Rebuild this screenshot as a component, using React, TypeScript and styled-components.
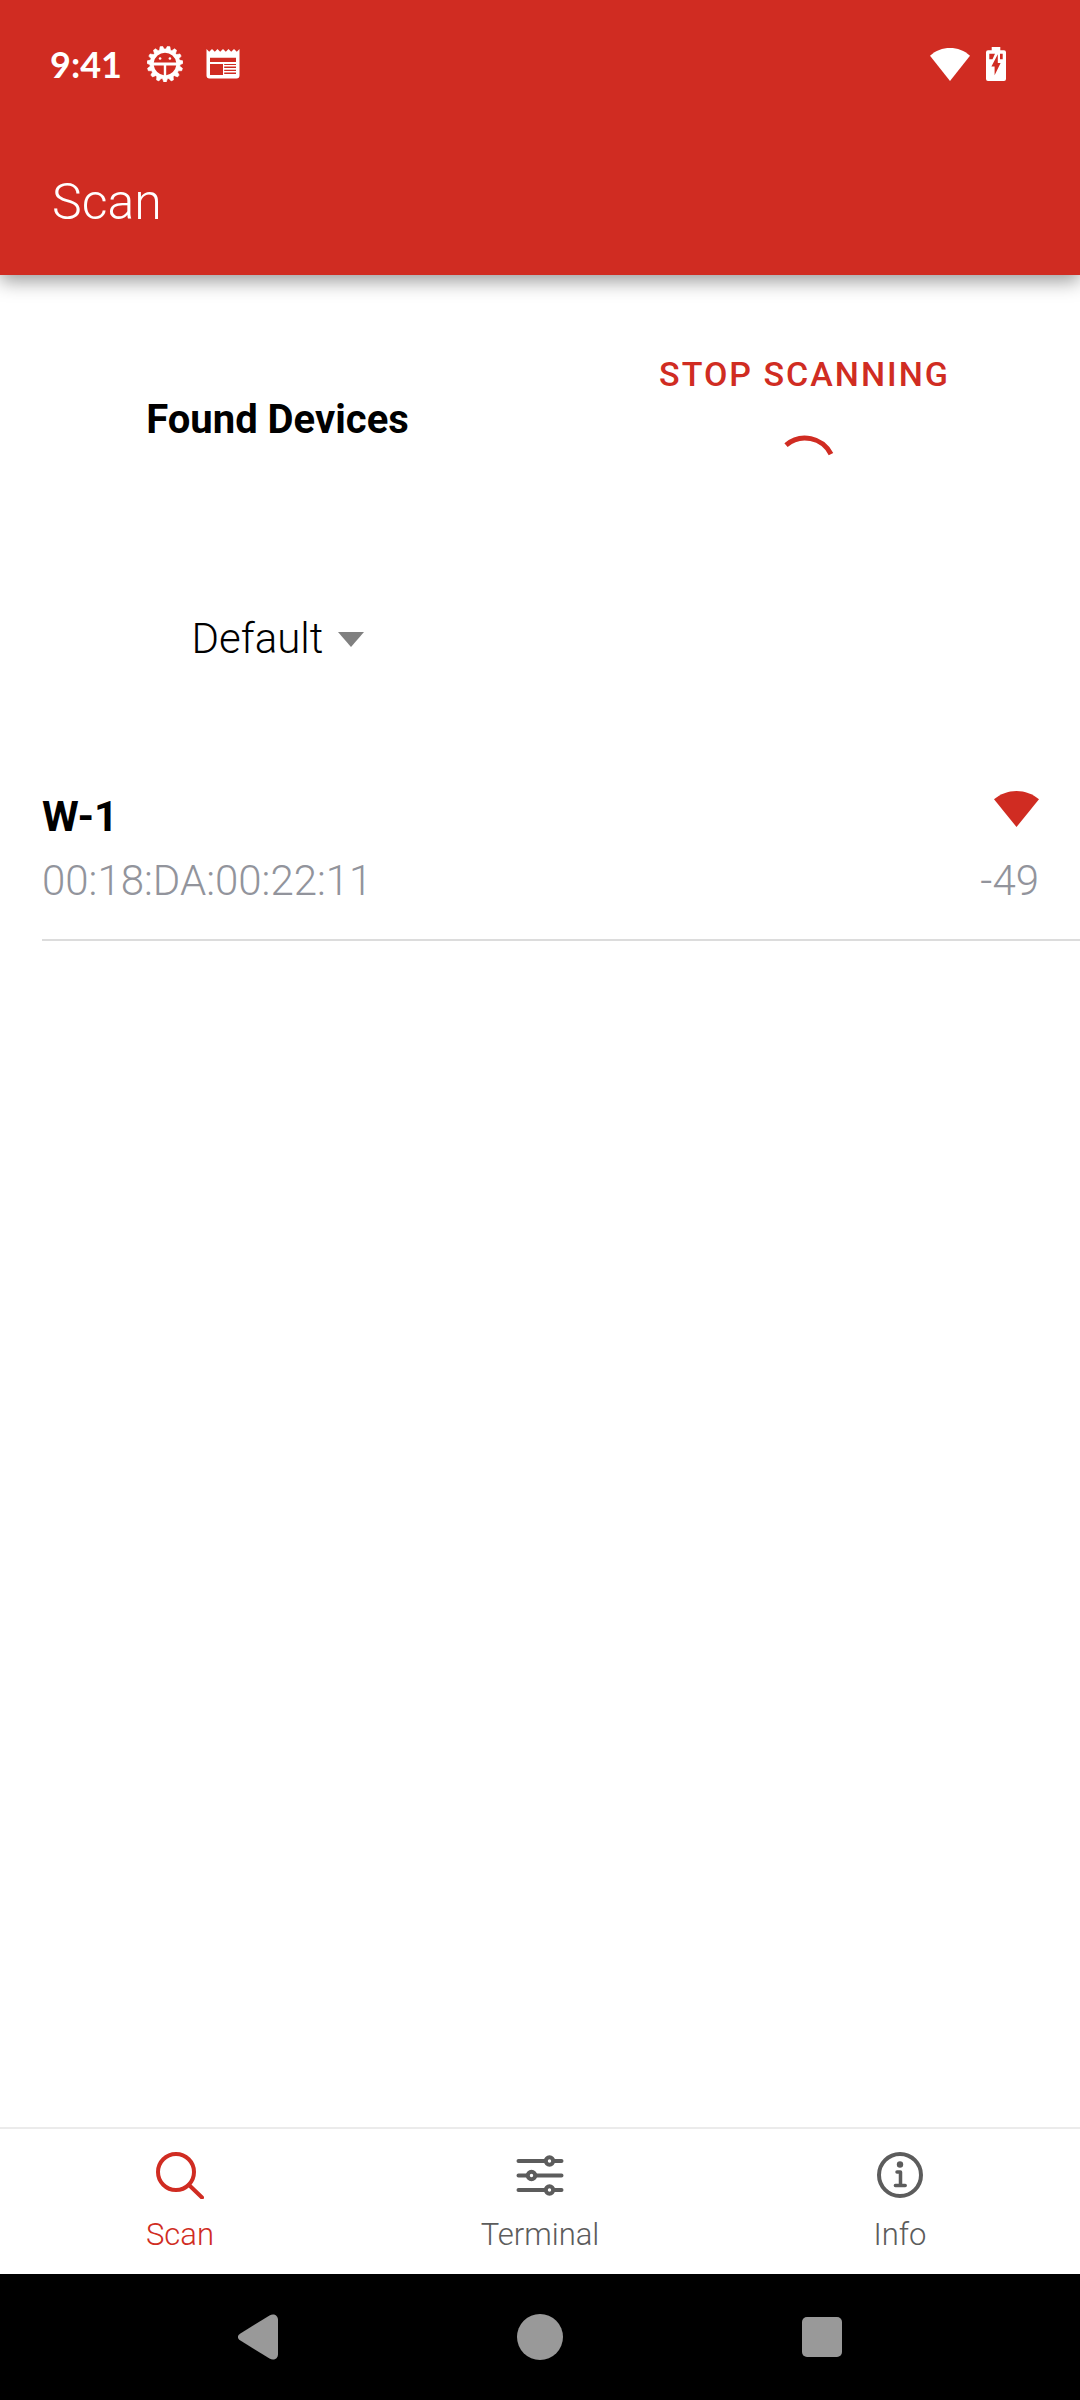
import React, { useState } from "react";
import styled, { createGlobalStyle } from "styled-components";

const RED = "#d02c22";
const SANS = 'Roboto, "Open Sans", "Liberation Sans", sans-serif';

const GlobalStyle = createGlobalStyle`
  *, *::before, *::after { box-sizing: border-box; }
  body {
    margin: 0;
    background: #fff;
    color: #000;
    font-family: ${SANS};
  }
  button, select {
    margin: 0;
    padding: 0;
    border: 0;
    background: none;
    color: inherit;
    font: inherit;
    cursor: pointer;
  }
  h1, h2, h3, p, ul { margin: 0; padding: 0; }
  svg { display: block; flex: none; }
`;

const Screen = styled.div`
  display: flex;
  flex-direction: column;
  min-height: 100vh;
`;

const Header = styled.header`
  background: ${RED};
  color: #fff;
  box-shadow: 0 6px 18px rgba(0, 0, 0, 0.4);
`;

const StatusBar = styled.div`
  display: flex;
  align-items: center;
  justify-content: space-between;
  height: 128px;
  padding: 0 74px 0 50px;
`;

const StatusGroup = styled.div<{ $gap: number }>`
  display: flex;
  align-items: center;
  gap: ${(p) => p.$gap}px;
`;

const Clock = styled.time`
  margin-right: 2px;
  font-family: Lato, ${SANS};
  font-size: 36px;
  font-weight: 700;
  line-height: 40px;
`;

const Toolbar = styled.div`
  display: flex;
  align-items: center;
  height: 147px;
  padding: 0 52px;
`;

const Title = styled.h1`
  font-size: 50px;
  font-weight: 300;
  line-height: 56px;
`;

const Main = styled.main`
  flex: 1;
`;

const Controls = styled.section`
  display: grid;
  grid-template-columns: 1fr 1fr;
  align-items: center;
  justify-items: center;
  padding: 66px 12px 0 14px;
`;

const SectionTitle = styled.h2`
  font-size: 40px;
  font-weight: 700;
  line-height: 52px;
`;

const ScanControl = styled.div`
  display: flex;
  flex-direction: column;
  align-items: center;
  gap: 28px;
`;

const ScanButton = styled.button`
  height: 66px;
  color: ${RED};
  font-size: 34px;
  font-weight: 500;
  line-height: 40px;
  letter-spacing: 2px;
  text-transform: uppercase;
`;

const FilterField = styled.label`
  display: flex;
  align-items: center;
  gap: 14px;
  height: 96px;
  margin-top: 92px;
`;

const FilterSelect = styled.select`
  appearance: none;
  font-size: 42px;
  font-weight: 300;
  line-height: 52px;
  outline-offset: 4px;
`;

const DeviceList = styled.ul`
  margin-top: 104px;
  padding-left: 42px;
  list-style: none;
`;

const DeviceRow = styled.li`
  display: flex;
  justify-content: space-between;
  padding: 0 41px 32px 0;
  border-bottom: 2px solid #dcdcdc;
`;

const DeviceColumn = styled.div<{ $align: string }>`
  display: flex;
  flex-direction: column;
  align-items: ${(p) => p.$align};
  gap: 12px;
`;

const DeviceName = styled.h3`
  font-size: 42px;
  font-weight: 700;
  line-height: 52px;
`;

const SignalSlot = styled.div`
  height: 52px;
`;

const DeviceDetail = styled.p`
  color: #92949c;
  font-size: 42px;
  font-weight: 300;
  line-height: 52px;
`;

const TabBar = styled.nav`
  display: grid;
  grid-template-columns: repeat(3, 1fr);
  height: 147px;
  border-top: 2px solid #ebebeb;
`;

const Tab = styled.button<{ $active: boolean }>`
  display: flex;
  flex-direction: column;
  align-items: center;
  gap: 16px;
  padding-top: 22px;
  color: ${(p) => (p.$active ? RED : "#5c5c5c")};
  font-size: 31px;
  font-weight: 300;
  line-height: 40px;
`;

const SystemNav = styled.nav`
  display: flex;
  justify-content: center;
  height: 126px;
  background: #000;
  color: #999;
`;

const SystemButton = styled.button`
  display: flex;
  align-items: center;
  justify-content: center;
  flex: 0 1 282px;
`;

const gearPoints = Array.from({ length: 60 }, (_, i) => {
  const tooth = Math.floor(i / 4);
  const corner = i % 4;
  const angle = ((tooth * 24 + [-9, -4, 4, 9][corner] + 180) * Math.PI) / 180;
  const r = corner === 0 || corner === 3 ? 15 : 18;
  return `${(18 + r * Math.sin(angle)).toFixed(2)},${(18 - r * Math.cos(angle)).toFixed(2)}`;
}).join(" ");

const DebugIcon = () => (
  <svg width="36" height="36" viewBox="0 0 36 36" aria-hidden="true">
    <polygon points={gearPoints} fill="currentColor" stroke="currentColor" strokeWidth="0.6" strokeLinejoin="round" />
    <path d="M6.8 16.6a11.3 11.3 0 0 1 22.4 0z" fill={RED} />
    <path d="M6.8 19.6H16.8V29.2A11.3 11.3 0 0 1 6.8 19.6zM19.2 19.6H29.2A11.3 11.3 0 0 1 19.2 29.2z" fill={RED} />
    <circle cx="13.1" cy="12.5" r="1.3" fill="currentColor" />
    <circle cx="22.9" cy="12.5" r="1.3" fill="currentColor" />
  </svg>
);

const NewsIcon = () => (
  <svg width="34" height="30" viewBox="0 0 34 30" aria-hidden="true">
    <path
      d="M.5 0L3.2 2.8 6 0 8.8 2.8 11.5 0 14.2 2.8 17 0 19.8 2.8 22.5 0 25.2 2.8 28 0 30.8 2.8 33.5 0V26.5a3 3 0 0 1-3 3H3.5a3 3 0 0 1-3-3z"
      fill="currentColor"
    />
    <path
      d="M4 8.7H30V13H4zM4 15H17V26H4zM18.2 15H30V16H18.2zM18.2 17.6H30V19H18.2zM18.2 20.7H30V22.1H18.2zM18.2 23.6H30V25H18.2z"
      fill={RED}
    />
  </svg>
);

const SignalIcon = ({ width, height, color }: { width: number; height: number; color: string }) => (
  <svg width={width} height={height} viewBox="0 0 46 37" preserveAspectRatio="none" aria-hidden="true">
    <path d="M23 37L0 8.6C6.5 3 14.4 0 23 0s16.5 3 23 8.6z" fill={color} />
  </svg>
);

const BatteryIcon = () => (
  <svg width="20" height="34" viewBox="0 0 20 34" aria-hidden="true">
    <path
      d="M5.7 0H14.3V3.3H18a2 2 0 0 1 2 2V32a2 2 0 0 1-2 2H2a2 2 0 0 1-2-2V5.3a2 2 0 0 1 2-2H5.7z"
      fill="currentColor"
    />
    <path d="M3.3 6.7H9L6.5 12.3H3.3zM14 6.7H16.7V12.3H14z" fill={RED} />
    <path d="M11.8 7.2V16H14.6L8.6 28.2V19.4H5.4z" fill={RED} />
  </svg>
);

const Spinner = () => (
  <svg width="64" height="64" viewBox="0 0 64 64" role="img" aria-label="Scanning">
    <path d="M13 10.1A29 29 0 0 1 58 19.2" fill="none" stroke={RED} strokeWidth="5" />
  </svg>
);

const CaretIcon = () => (
  <svg width="26" height="15" viewBox="0 0 26 15" aria-hidden="true">
    <path d="M0 0H26L13 15z" fill="#808080" />
  </svg>
);

const tabIconProps = {
  width: 48,
  height: 48,
  viewBox: "0 0 48 48",
  fill: "none",
  stroke: "currentColor",
  strokeWidth: 4,
  strokeLinecap: "round" as const,
  "aria-hidden": true,
};

const SearchIcon = () => (
  <svg {...tabIconProps}>
    <circle cx="20" cy="21" r="18" />
    <path d="M33 34L46 46.500" />
  </svg>
);

const SlidersIcon = () => (
  <svg {...tabIconProps}>
    <path d="M2.500 10H29M38 10H45.500M2.500 24.500H11M20 24.500H45.500M2.500 39H29M38 39H45.500" />
    <circle cx="33.500" cy="10" r="3.700" />
    <circle cx="15.500" cy="24.500" r="3.700" />
    <circle cx="33.500" cy="39" r="3.700" />
  </svg>
);

const InfoIcon = () => (
  <svg {...tabIconProps}>
    <circle cx="24" cy="24" r="21" />
    <circle cx="24" cy="13.500" r="3.200" fill="currentColor" stroke="none" />
    <path d="M21 21H24.500V34.500M19.400 34.500H29.200" strokeWidth="3.500" strokeLinejoin="round" />
  </svg>
);

const BackIcon = () => (
  <svg width="40" height="46" viewBox="0 0 40 46" fill="currentColor" aria-hidden="true">
    <path d="M2 19.800L31.500 1.400C35.500-1 40 1 40 6V40c0 5-4.500 7-8.500 4.600L2 26.200C-.7 24.400-.7 21.600 2 19.800z" />
  </svg>
);

const HomeIcon = () => (
  <svg width="46" height="46" viewBox="0 0 46 46" fill="currentColor" aria-hidden="true">
    <circle cx="23" cy="23" r="23" />
  </svg>
);

const RecentsIcon = () => (
  <svg width="40" height="40" viewBox="0 0 40 40" fill="currentColor" aria-hidden="true">
    <rect width="40" height="40" rx="5" />
  </svg>
);

const tabs = [
  { name: "Scan", Icon: SearchIcon },
  { name: "Terminal", Icon: SlidersIcon },
  { name: "Info", Icon: InfoIcon },
];

const devices = [{ name: "W-1", address: "00:18:DA:00:22:11", rssi: -49 }];

export default function App() {
  const [active, setActive] = useState("Scan");

  return (
    <Screen>
      <GlobalStyle />
      <Header>
        <StatusBar>
          <StatusGroup $gap={23}>
            <Clock>9:41</Clock>
            <DebugIcon />
            <NewsIcon />
          </StatusGroup>
          <StatusGroup $gap={16}>
            <SignalIcon width={40} height={33} color="#fff" />
            <BatteryIcon />
          </StatusGroup>
        </StatusBar>
        <Toolbar>
          <Title>Scan</Title>
        </Toolbar>
      </Header>

      <Main>
        <Controls>
          <SectionTitle>Found Devices</SectionTitle>
          <ScanControl>
            <ScanButton type="button">Stop scanning</ScanButton>
            <Spinner />
          </ScanControl>
          <FilterField>
            <FilterSelect aria-label="Device filter" defaultValue="Default">
              <option>Default</option>
            </FilterSelect>
            <CaretIcon />
          </FilterField>
        </Controls>

        <DeviceList>
          {devices.map((d) => (
            <DeviceRow key={d.address}>
              <DeviceColumn $align="flex-start">
                <DeviceName>{d.name}</DeviceName>
                <DeviceDetail>{d.address}</DeviceDetail>
              </DeviceColumn>
              <DeviceColumn $align="flex-end">
                <SignalSlot>
                  <SignalIcon width={45} height={36} color={RED} />
                </SignalSlot>
                <DeviceDetail>{d.rssi}</DeviceDetail>
              </DeviceColumn>
            </DeviceRow>
          ))}
        </DeviceList>
      </Main>

      <TabBar aria-label="Sections">
        {tabs.map(({ name, Icon }) => (
          <Tab key={name} type="button" $active={active === name} onClick={() => setActive(name)}>
            <Icon />
            {name}
          </Tab>
        ))}
      </TabBar>

      <SystemNav aria-label="System">
        <SystemButton type="button" aria-label="Back">
          <BackIcon />
        </SystemButton>
        <SystemButton type="button" aria-label="Home">
          <HomeIcon />
        </SystemButton>
        <SystemButton type="button" aria-label="Recent apps">
          <RecentsIcon />
        </SystemButton>
      </SystemNav>
    </Screen>
  );
}
